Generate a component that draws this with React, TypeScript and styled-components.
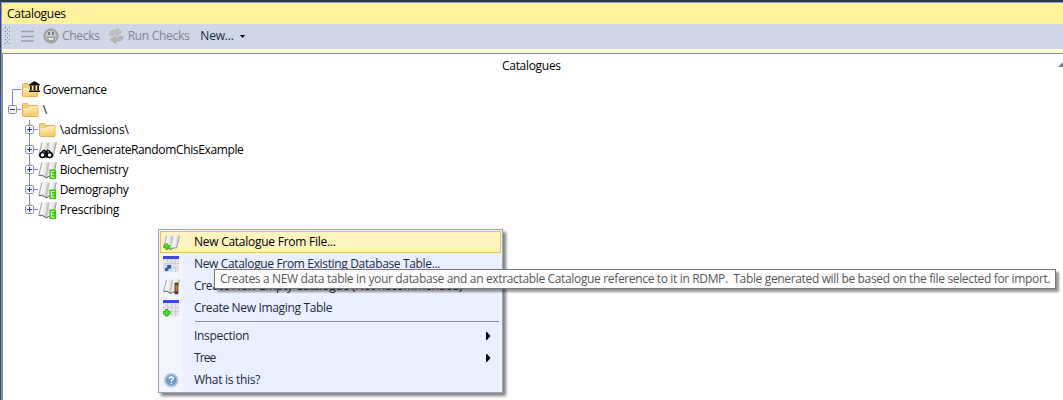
import React from "react";
import styled, { createGlobalStyle } from "styled-components";

const GlobalStyle = createGlobalStyle`
  * { box-sizing: border-box; }
  body { margin: 0; overflow: hidden; font-family: "Open Sans", "Noto Sans", sans-serif; font-size: 12px; line-height: 16px; color: #000; }
  svg { display: block; flex: none; }
`;

const Text = styled.span<{ $ls?: number }>`
  white-space: pre;
  letter-spacing: ${(p) => p.$ls ?? -0.3}px;
`;

const Window = styled.div`
  position: relative;
  display: flex;
  flex-direction: column;
  width: 1063px;
  height: 400px;
  overflow: hidden;
  background: #fff;
  border-top: 2px solid #293955;
  border-left: 1px solid #35496a;
`;
const Body = styled.div`
  flex: 1;
  display: flex;
  flex-direction: column;
  border-top: 1px solid #8e9bbc;
  border-left: 1px solid #8e9bbc;
`;
const TitleBar = styled.div`
  height: 21px;
  padding: 3px 0 0 5px;
  background: #fff29d;
`;
const Toolbar = styled.div`
  display: flex;
  align-items: center;
  height: 25px;
  padding-bottom: 1px;
  background: #cfd6e5;
  color: #838791;
`;
const ToolItem = styled.div<{ $gap: number; $left: number; $active?: boolean }>`
  display: flex;
  align-items: center;
  gap: ${(p) => p.$gap}px;
  margin-left: ${(p) => p.$left}px;
  color: ${(p) => (p.$active ? "#1b293e" : "inherit")};
`;
const Strip = styled.div`
  height: 5px;
  background: #ffffd9;
  border-bottom: 1px solid #828790;
`;
const Tree = styled.div`
  flex: 1;
  background: #fff;
  border-left: 1px solid #828790;
`;
const ColumnHeader = styled.div`
  display: flex;
  justify-content: flex-end;
  padding: 4px 0 0;
  height: 26px;
`;
const HeaderLabel = styled.div`
  width: 556px;
`;
const SortMark = styled.svg`
  margin-top: 4px;
`;
const Row = styled.div`
  display: flex;
  height: 20px;
  align-items: center;
`;

const Menu = styled.div`
  position: absolute;
  left: 157px;
  top: 227px;
  width: 345px;
  height: 164px;
  padding: 1px;
  border: 1px solid #9ba7b7;
  background: linear-gradient(90deg, #f2f4fe 24px, #eaf0ff 24px);
  box-shadow: 3px 3px 3px rgba(0, 0, 0, 0.5);
  color: #1b293e;
`;
const MenuItem = styled.div<{ $hot?: boolean }>`
  display: flex;
  align-items: center;
  height: 22px;
  padding-left: ${(p) => (p.$hot ? 2 : 3)}px;
  padding-right: 10px;
  border: ${(p) => (p.$hot ? "1px solid #e5c365" : "0")};
  background: ${(p) => (p.$hot ? "#fdf4bf" : "none")};
  color: ${(p) => (p.$hot ? "#000" : "inherit")};
`;
const IconSlot = styled.div`
  width: 31px;
  flex: none;
`;
const Fill = styled.div`
  flex: 1;
`;
const Separator = styled.div`
  height: 1px;
  margin: 2px 2px 3px 35px;
  background: #8591a5;
`;
const Tooltip = styled.div`
  position: absolute;
  left: 213px;
  top: 267px;
  width: 842px;
  height: 20px;
  padding: 1px 0 0 5px;
  border: 1px solid #767676;
  background: #fff;
  color: #575757;
  box-shadow: 3px 3px 2px rgba(0, 0, 0, 0.4);
`;

const Grip = () => (
  <svg width="19" height="18" viewBox="0 0 19 18">
    {[0, 4, 8, 12, 16].map((y) => (
      <path key={y} d={`M3 ${y + 0.5}h1M7 ${y + 0.5}h1${y < 16 ? `M5 ${y + 2.5}h1` : ""}`} stroke="#72809b" />
    ))}
  </svg>
);

const Folder = ({ governed }: { governed?: boolean }) => (
  <svg width="19" height="20" viewBox="0 0 19 20">
    <defs>
      <linearGradient id="folder" x1="0" x2="0.4" y1="0" y2="1">
        <stop offset="0" stopColor="#fff0bd" />
        <stop offset="1" stopColor="#f4cd68" />
      </linearGradient>
    </defs>
    <path d="M1.5 15.5V4.5Q1.5 3.5 2.5 3.5H6.5L8 5.5H16Q17 5.5 17 6.5V15.5Q17 16.5 16 16.5H2.5Q1.5 16.5 1.5 15.5Z" fill="#f2cf75" stroke="#e0b453" />
    <path d="M2.5 9H8L9.5 7H16.5V16H2.5Z" fill="url(#folder)" />
    <path d="M2.5 9H8L9.5 7H16.5" fill="none" stroke="#fffbe6" />
    {governed && (
      <path d="M8 4.5L13.5 1L19 4.5V5.5H8ZM9 6H10.7V10H9ZM12.6 6H14.4V10H12.6ZM16.3 6H18V10H16.3ZM8 10.5H19V12H8Z" fill="#111" />
    )}
  </svg>
);

type Badge = "E" | "binoculars" | "plus" | "pen";
const Book = ({ badge, small }: { badge: Badge; small?: boolean }) => (
  <svg width={small ? 17 : 19} height={small ? 17 : 20} viewBox="0 0 20 20">
    <defs>
      <linearGradient id="page" x1="0" x2="1" y1="0" y2="0.15">
        <stop offset="0" stopColor="#d2d2d2" />
        <stop offset="0.25" stopColor="#fafafa" />
        <stop offset="0.45" stopColor="#e4e4e4" />
        <stop offset="0.54" stopColor="#bcbcbc" />
        <stop offset="0.68" stopColor="#fafafa" />
        <stop offset="1" stopColor="#cfcfcf" />
      </linearGradient>
    </defs>
    <path d="M4.5 1.5Q7 .5 10.5 2.5Q14 0 17 2L19.5 1.5L16.5 17Q12 15.5 9 18.5Q5 15.5 .8 16.5Z" fill="url(#page)" />
    <path d="M4.2 2L.8 15.5Q5 14.5 9 18Q12 15.5 16 16.5L19.3 2" fill="none" stroke="#999" />
    <path d="M1 15.8Q5 15 9 18.3Q11 16.5 13 16.3" fill="none" stroke="#666" />
    {badge === "E" && (
      <>
        <path d="M12 9.5H19V19.5H12Z" fill="#38c800" />
        <path d="M17.6 11.5H14V17.5H17.6M14 14.5H17" fill="none" stroke="#fff" />
      </>
    )}
    {badge === "binoculars" && (
      <>
        <path d="M1.5 15L4.5 10.5L7 9.5L8.5 11L10 9.5L12.5 10.5L15.5 15V17H1.5Z" fill="#000" />
        <circle cx="4.8" cy="15.3" r="2.7" fill="#fff" stroke="#000" strokeWidth="1.6" />
        <circle cx="12.2" cy="15.3" r="2.7" fill="#fff" stroke="#000" strokeWidth="1.6" />
        <path d="M5.5 12H7M10 12H11.5" stroke="#fff" />
      </>
    )}
    {badge === "plus" && <Plus x={0.5} y={11} />}
    {badge === "pen" && (
      <>
        <path d="M13.5 5.5H18V19H13.5Z" fill="#4a3a30" />
        <path d="M14.7 8H17V15.5H14.7Z" fill="#e8762c" />
      </>
    )}
  </svg>
);
const Plus = ({ x, y }: { x: number; y: number }) => (
  <path transform={`translate(${x} ${y})`} d="M2.5 .5H5V2.5H7V5H5V7H2.5V5H.5V2.5H2.5Z" fill="#41ef24" stroke="#22b314" />
);
const Grid = ({ kind }: { kind: "link" | "plus" }) => (
  <svg width="17" height="18" viewBox="0 0 17 18">
    <path d="M0 1H16V17H0Z" fill="#e6e6e8" />
    <path d="M0 8.5H16M0 12.5H16M4.5 4V17M8.5 4V17M12.5 4V17" stroke="#cfd0d4" />
    <path d="M0 1H16V4H0Z" fill="#3c48ea" />
    {kind === "plus" ? (
      <Plus x={0} y={10} />
    ) : (
      <>
        <path d="M1 9H8V16.5H1Z" fill="#c9dcf1" />
        <path d="M2 16V13.5L4.5 12L4 10H8V13.5L6 13.5L4.5 16Z" fill="#2f629f" />
      </>
    )}
  </svg>
);
const Help = () => (
  <svg width="17" height="18" viewBox="0 0 17 18">
    <circle cx="8.3" cy="9.2" r="6.8" fill="#9db9da" stroke="#c2cfe2" />
    <circle cx="8.3" cy="9.2" r="5" fill="#6d99ca" />
    <path d="M6.3 7.7Q6.3 6 8.3 6Q10.3 6 10.3 7.6Q10.3 8.6 8.4 9.5V10.8M8.4 11.8V13" fill="none" stroke="#fff" strokeWidth="1.4" />
  </svg>
);
const Arrow = () => (
  <svg width="5" height="8" viewBox="0 0 5 8"><path d="M0 0H1L4.5 4L1 8H0Z" fill="#000" /></svg>
);

const Branch = ({ kind }: { kind: "governance" | "root" | "child" | "first" | "last" }) => {
  const deep = kind !== "governance" && kind !== "root";
  const x = deep ? 26.5 : 9.5;
  const lines =
    kind === "governance" ? "M9.5 20V9.5H18" :
    kind === "root" ? "M9.5 0V6M14 9.5H18" :
    kind === "last" ? "M26.5 0V6M31 9.5H36" : "M26.5 0V6M26.5 14V20M31 9.5H36";
  return (
    <svg width={deep ? 35 : 18} height="20">
      <path d={lines} fill="none" stroke="#8080ff" />
      {kind !== "governance" && (
        <>
          <rect x={x - 4} y="5.5" width="8" height="8" rx="1" fill="#f4f4f4" stroke="#919191" />
          <path d={`M${x - 2.5} 9.5H${x + 2.5}${kind === "root" ? "" : `M${x} 7V12`}`} stroke="#2b3f8c" />
        </>
      )}
    </svg>
  );
};

const datasets: { name: string; badge: Badge; ls: number }[] = [
  { name: "API_GenerateRandomChisExample", badge: "binoculars", ls: -0.36 },
  { name: "Biochemistry", badge: "E", ls: -0.38 },
  { name: "Demography", badge: "E", ls: -0.4 },
  { name: "Prescribing", badge: "E", ls: -0.3 },
];

export default function App() {
  return (
    <>
      <GlobalStyle />
      <Window>
        <Body>
          <TitleBar><Text>Catalogues</Text></TitleBar>
          <Toolbar>
            <Grip />
            <svg width="13" height="12"><path d="M0 1.5H13M0 6.5H13M0 11H13" stroke="#9b9fa8" strokeWidth="1.5" /></svg>
            <ToolItem $left={9} $gap={3}>
              <svg width="16" height="16" viewBox="0 0 16 16">
                <circle cx="8" cy="8" r="7" fill="#a9a9a9" stroke="#969696" />
                <circle cx="8" cy="8" r="5.3" fill="#c8c8c8" />
                <path d="M6 4V7M10 4V7" stroke="#777" strokeWidth="1.8" />
                <path d="M4 9Q8 10 12 9Q11 13 8 13Q5 13 4 9Z" fill="#eee" stroke="#888" />
              </svg>
              <Text>Checks</Text>
            </ToolItem>
            <ToolItem $left={8} $gap={4}>
              <svg width="16" height="16" viewBox="0 0 16 16">
                <path d="M1 7Q1 2 7 2H9V0L14 4L9 8V6Q6 5 5 8Z" fill="#bebebe" stroke="#b0b0b0" strokeWidth=".5" />
                <path d="M15 8Q16 13 10 13H8V16L2 11.5L8 8V10Q10 11 11 8Z" fill="#b5b5b5" stroke="#a8a8a8" strokeWidth=".5" />
              </svg>
              <Text>Run Checks</Text>
            </ToolItem>
            <ToolItem $left={11} $gap={6} $active>
              <Text $ls={-0.2}>New...</Text>
              <svg width="5" height="3"><path d="M0 0H5L2.5 3Z" fill="#000" /></svg>
            </ToolItem>
          </Toolbar>
          <Strip />
          <Tree>
            <ColumnHeader>
              <HeaderLabel><Text>Catalogues</Text></HeaderLabel>
              <SortMark width="5" height="5"><path d="M5 0V5H0Z" fill="#6d7f94" /></SortMark>
            </ColumnHeader>
            <Row><Branch kind="governance" /><Folder governed /><Text $ls={-0.37}> Governance</Text></Row>
            <Row><Branch kind="root" /><Folder /><Text> \</Text></Row>
            <Row><Branch kind="first" /><Folder /><Text $ls={-0.25}> \admissions\</Text></Row>
            {datasets.map((d, i) => (
              <Row key={d.name}>
                <Branch kind={i === datasets.length - 1 ? "last" : "child"} />
                <Book badge={d.badge} />
                <Text $ls={d.ls}> {d.name}</Text>
              </Row>
            ))}
          </Tree>
        </Body>
        <Menu>
          <MenuItem $hot><IconSlot><Book small badge="plus" /></IconSlot><Text $ls={-0.26}>New Catalogue From File...</Text></MenuItem>
          <MenuItem><IconSlot><Grid kind="link" /></IconSlot><Text $ls={-0.345}>New Catalogue From Existing Database Table...</Text></MenuItem>
          <MenuItem><IconSlot><Book small badge="pen" /></IconSlot><Text>Create New Empty Catalogue (Not Recommended)</Text></MenuItem>
          <MenuItem><IconSlot><Grid kind="plus" /></IconSlot><Text $ls={-0.34}>Create New Imaging Table</Text></MenuItem>
          <Separator />
          <MenuItem><IconSlot /><Text>Inspection</Text><Fill /><Arrow /></MenuItem>
          <MenuItem><IconSlot /><Text $ls={-0.9}>Tree</Text><Fill /><Arrow /></MenuItem>
          <MenuItem><IconSlot><Help /></IconSlot><Text>What is this?</Text></MenuItem>
        </Menu>
        <Tooltip><Text $ls={-0.347}>Creates a NEW data table in your database and an extractable Catalogue reference to it in RDMP.  Table generated will be based on the file selected for import.</Text></Tooltip>
      </Window>
    </>
  );
}
